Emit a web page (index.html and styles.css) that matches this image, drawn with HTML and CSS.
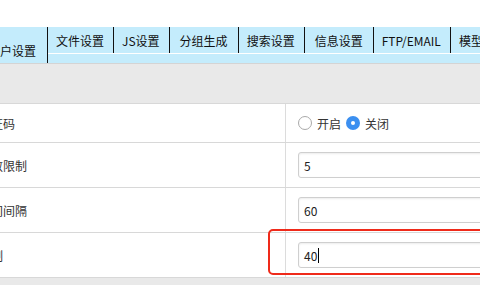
FILE: index.html
```html
<!DOCTYPE html>
<html lang="zh-CN">
<head>
  <meta charset="UTF-8">
  <title>系统设置</title>
  <link rel="stylesheet" href="styles.css">
</head>
<body>
  <div class="page">
    <!-- 选项卡 -->
    <div class="tabbar">
      <span class="tab active">用户设置</span>
      <div class="tab-rest">
        <span class="tab">文件设置</span>
        <span class="tab">JS设置</span>
        <span class="tab wide">分组生成</span>
        <span class="tab">搜索设置</span>
        <span class="tab wide">信息设置</span>
        <span class="tab">FTP/EMAIL</span>
        <span class="tab">模型设置</span>
      </div>
    </div>

    <!-- 设置表格 -->
    <div class="content">
      <div class="table">
        <div class="row first">
          <div class="label">验证码</div>
          <div class="field">
            <label class="radio"><span class="dot"></span>开启</label>
            <label class="radio"><span class="dot on"></span>关闭</label>
          </div>
        </div>
        <div class="row">
          <div class="label">次数限制</div>
          <div class="field"><div class="input">5</div></div>
        </div>
        <div class="row">
          <div class="label">时间间隔</div>
          <div class="field"><div class="input">60</div></div>
        </div>
        <div class="row">
          <div class="label">限制</div>
          <div class="field"><div class="input">40<span class="caret"></span></div></div>
        </div>
      </div>
      <div class="highlight"></div>
    </div>
  </div>
</body>
</html>
```

FILE: styles.css
```css
* {
  margin: 0;
  padding: 0;
  box-sizing: border-box;
}

body {
  width: 480px;
  height: 285px;
  overflow: hidden;
  background: #fff;
  font-family: "Noto Sans CJK SC", "Noto Sans", sans-serif;
  font-size: 12px;
  color: #333;
}

/* 页面整体向左偏移（截图被裁剪） */
.page {
  width: 640px;
  margin-left: -30px;
  padding-top: 27px;
}

/* 选项卡 */
.tabbar {
  display: flex;
  align-items: flex-start;
  height: 37px;
  background: #c4ecfc;
  border-bottom: 1px solid #d4d4d4;
}

.tab {
  display: flex;
  align-items: center;
  flex-shrink: 0;
  height: 26px;
  padding: 0 9px 0 8px;
  color: #111;
  white-space: nowrap;
  border-right: 1px solid #111;
}

.tab.wide {
  padding: 0 10px;
}

.tab.active {
  height: 36px;
  padding: 11px 11px 0 18px;
}

.tab-rest {
  display: flex;
  flex: 1;
  border-bottom: 1px solid #fff;
}

/* 内容区 */
.content {
  position: relative;
  background: #e9e9e9;
  padding-top: 39px;
  height: 221px;
}

.table {
  background: #fff;
  border-top: 1px solid #d8d8d8;
}

.row {
  display: flex;
  height: 45px;
  border-bottom: 1px solid #d8d8d8;
}

.row.first {
  height: 39px;
}

.label {
  flex-shrink: 0;
  width: 316px;
  padding-left: 9px;
  display: flex;
  align-items: center;
  border-right: 1px solid #dcdcdc;
  color: #333;
}

.field {
  flex: 1;
  display: flex;
  align-items: center;
  padding-left: 12px;
}

.radio {
  display: flex;
  align-items: center;
  gap: 5px;
  margin-right: 5px;
  color: #333;
}

.dot {
  width: 14px;
  height: 14px;
  border: 1px solid #a9a9a9;
  border-radius: 50%;
  background: #fff;
}

.dot.on {
  border: none;
  background: #3b8ff0;
  position: relative;
}

.dot.on::after {
  content: "";
  position: absolute;
  left: 5px;
  top: 5px;
  width: 4px;
  height: 4px;
  border-radius: 50%;
  background: #fff;
}

.input {
  display: flex;
  align-items: center;
  width: 300px;
  height: 26px;
  padding-left: 5px;
  border: 1px solid #cfcfcf;
  border-radius: 3px;
  box-shadow: inset 0 1px 2px rgba(0, 0, 0, 0.08);
  color: #222;
}

.caret {
  width: 1px;
  height: 15px;
  margin-left: 1px;
  background: #000;
}

/* 红色标注框 */
.highlight {
  position: absolute;
  left: 298px;
  top: 165px;
  width: 260px;
  height: 46px;
  border: 2px solid #ef2a1a;
  border-radius: 5px;
}
```
